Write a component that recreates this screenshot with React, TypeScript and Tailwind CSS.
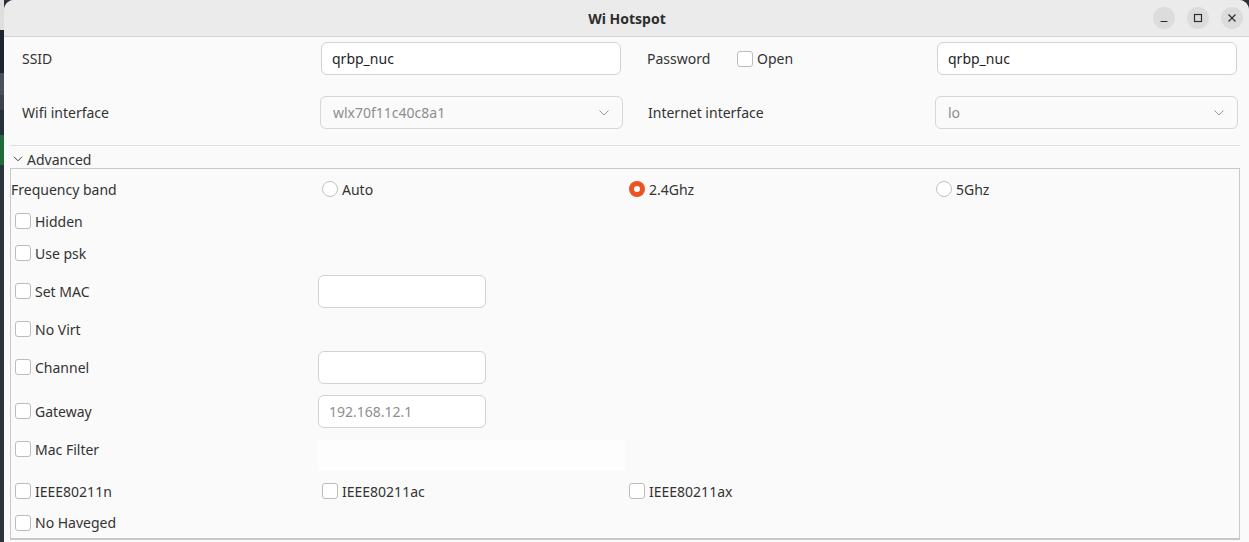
import React from 'react';

const font = { fontFamily: '"Noto Sans", "Open Sans", sans-serif' };

function Check({ label }: { label: string }) {
  return (
    <div className="flex items-center gap-[4px]">
      <span className="w-[16px] h-[16px] rounded-[3px] border border-[#bcbcbc] bg-white shrink-0" />
      <span>{label}</span>
    </div>
  );
}

function Radio({ label, on }: { label: string; on?: boolean }) {
  return (
    <div className="flex items-center gap-[4px]">
      {on ? (
        <span className="w-[16px] h-[16px] rounded-full bg-[#e95420] flex items-center justify-center shrink-0">
          <span className="w-[6px] h-[6px] rounded-full bg-white" />
        </span>
      ) : (
        <span className="w-[16px] h-[16px] rounded-full border border-[#c2c2c2] bg-white shrink-0" />
      )}
      <span>{label}</span>
    </div>
  );
}

function Field({ value, muted, w = 'w-[300px]' }: { value?: string; muted?: boolean; w?: string }) {
  return (
    <div
      className={`${w} h-[33px] rounded-[6px] border border-[#d2d2d2] bg-white flex items-center px-[10px] ${
        muted ? 'text-[#8e8e8e]' : 'text-[#1e1e1e]'
      }`}
    >
      {value}
    </div>
  );
}

function Combo({ value }: { value: string }) {
  return (
    <div className="w-[303px] h-[33px] rounded-[6px] border border-[#d6d6d6] bg-[#fafafa] flex items-center justify-between pl-[12px] pr-[12px] text-[#8e8e8e]">
      <span>{value}</span>
      <svg width="12" height="8" viewBox="0 0 12 8" fill="none" stroke="#9a9a9a" strokeWidth="1">
        <path d="M1.5 1.5 L6 6 L10.5 1.5" />
      </svg>
    </div>
  );
}

function TitleButton({ kind }: { kind: 'min' | 'max' | 'close' }) {
  return (
    <div className="w-[22px] h-[22px] rounded-full bg-[#dcdcdc] flex items-center justify-center">
      <svg width="10" height="10" viewBox="0 0 10 10" fill="none" stroke="#2e2e2e" strokeWidth="1.2">
        {kind === 'min' && <path d="M1.5 8.5 H8.5" />}
        {kind === 'max' && <rect x="1.5" y="1.5" width="7" height="7" />}
        {kind === 'close' && <path d="M1.5 1.5 L8.5 8.5 M8.5 1.5 L1.5 8.5" />}
      </svg>
    </div>
  );
}

export default function App() {
  return (
    <div className="w-[1249px] h-[542px] flex overflow-hidden bg-[#2c323b] text-[14px] text-[#333333]" style={font}>
      {/* sliver of the desktop behind the window */}
      <div className="w-[4px] flex flex-col shrink-0">
        <div className="h-[30px] bg-[#dedede]" />
        <div className="h-[43px] bg-[#1e2530]" />
        <div className="h-[22px] bg-[#4a515b]" />
        <div className="h-[15px] bg-[#3a424d]" />
        <div className="h-[25px] bg-[#25303d]" />
        <div className="h-[30px] bg-[#1f6b3b]" />
        <div className="flex-1 bg-[#2d333b]" />
      </div>

      <div className="flex-1 flex flex-col rounded-t-[10px] overflow-hidden bg-[#fafafa]">
        {/* title bar */}
        <div className="h-[37px] shrink-0 bg-[#ebebeb] border-b border-[#d3d3d3] flex items-center relative">
          <div className="flex-1 text-center font-bold text-[#2e2e2e] pl-[1px]">Wi Hotspot</div>
          <div className="absolute right-[6px] top-[7px] flex gap-[12px]">
            <TitleButton kind="min" />
            <TitleButton kind="max" />
            <TitleButton kind="close" />
          </div>
        </div>

        {/* main fields */}
        <div className="pt-[5px] pl-[18px] flex flex-col gap-[21px]">
          <div className="flex items-center h-[33px]">
            <div className="w-[299px]">SSID</div>
            <Field value="qrbp_nuc" />
            <div className="w-[26px]" />
            <div className="w-[90px]">Password</div>
            <div className="w-[200px]">
              <Check label="Open" />
            </div>
            <Field value="qrbp_nuc" />
          </div>
          <div className="flex items-center h-[33px]">
            <div className="w-[298px]">Wifi interface</div>
            <Combo value="wlx70f11c40c8a1" />
            <div className="w-[25px]" />
            <div className="w-[287px]">Internet interface</div>
            <Combo value="lo" />
          </div>
        </div>

        <div className="mt-[16px] ml-[6px] mr-[9px] h-px bg-[#dedede]" />

        <div className="h-[22px] pt-[4px] pl-[9px] flex items-center gap-[4px]">
          <svg width="10" height="6" viewBox="0 0 10 6" fill="none" stroke="#444" strokeWidth="1">
            <path d="M1 0.8 L5 4.8 L9 0.8" />
          </svg>
          <span>Advanced</span>
        </div>

        {/* advanced group */}
        <div className="ml-[6px] mr-[9px] h-[372px] border border-[#c8c8c8] border-b-2 flex flex-col">
          <div className="h-[40px] shrink-0 grid grid-cols-[311px_307px_307px_1fr] items-center">
            <div>Frequency band</div>
            <Radio label="Auto" />
            <Radio label="2.4Ghz" on />
            <Radio label="5Ghz" />
          </div>
          <div className="h-[24px] shrink-0 flex items-center pl-[4px]">
            <Check label="Hidden" />
          </div>
          <div className="h-[40px] shrink-0 flex items-center pl-[4px]">
            <Check label="Use psk" />
          </div>
          <div className="h-[36px] shrink-0 grid grid-cols-[303px_1fr] items-center pl-[4px]">
            <Check label="Set MAC" />
            <Field w="w-[168px]" />
          </div>
          <div className="h-[40px] shrink-0 flex items-center pl-[4px]">
            <Check label="No Virt" />
          </div>
          <div className="h-[36px] shrink-0 grid grid-cols-[303px_1fr] items-center pl-[4px]">
            <Check label="Channel" />
            <Field w="w-[168px]" />
          </div>
          <div className="h-[52px] shrink-0 grid grid-cols-[303px_1fr] items-center pl-[4px]">
            <Check label="Gateway" />
            <Field w="w-[168px]" value="192.168.12.1" muted />
          </div>
          <div className="h-[38px] shrink-0 grid grid-cols-[303px_1fr] items-start pl-[4px]">
            <div className="h-[24px] flex items-center">
              <Check label="Mac Filter" />
            </div>
            <div className="mt-[3px] w-[307px] h-[31px] bg-[#fdfdfd]" />
          </div>
          <div className="h-[32px] shrink-0 grid grid-cols-[307px_307px_1fr] items-center pl-[4px]">
            <Check label="IEEE80211n" />
            <Check label="IEEE80211ac" />
            <Check label="IEEE80211ax" />
          </div>
          <div className="flex-1 flex items-center pl-[4px]">
            <Check label="No Haveged" />
          </div>
        </div>
      </div>
    </div>
  );
}
